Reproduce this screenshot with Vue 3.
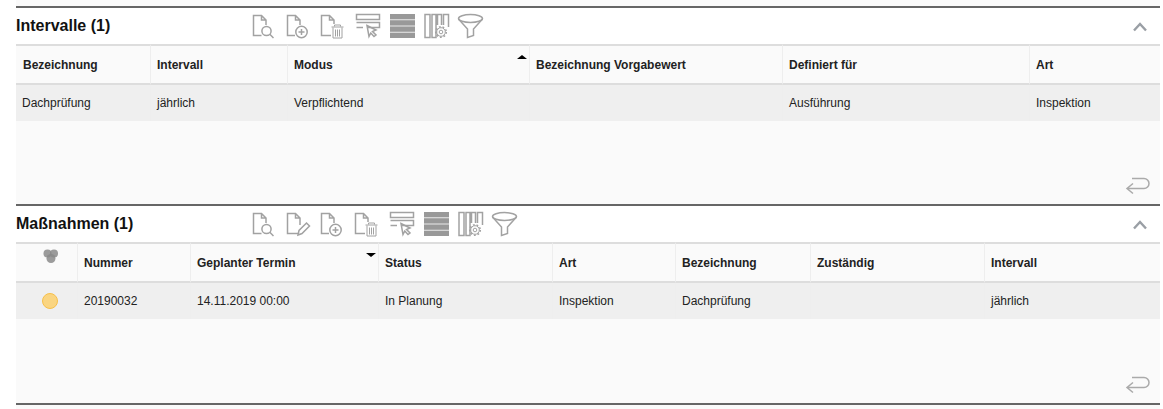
<template>
  <div class="page">
    <svg class="defs" width="0" height="0">
      <symbol id="i-search" viewBox="0 0 28 26">
        <path d="M9.5 22.5H1.5V2.5H9.5L14 7V12M9.5 2.5V7H14" />
        <circle cx="14.5" cy="18" r="4.6" />
        <path d="M17.8 21.3L21.5 25" />
      </symbol>
      <symbol id="i-edit" viewBox="0 0 28 26">
        <path d="M13 22.5H1.5V2.5H9.5L14 7V14M9.5 2.5V7H14" />
        <path d="M12 24L13 19.5L20.5 12L23.5 15L16 22.5Z" />
      </symbol>
      <symbol id="i-add" viewBox="0 0 28 26">
        <path d="M9 22.5H1.5V2.5H9.5L14 7V12M9.5 2.5V7H14" />
        <circle cx="15.5" cy="19" r="5.7" />
        <path d="M15.5 16V22M12.5 19H18.5" />
      </symbol>
      <symbol id="i-trash" viewBox="0 0 28 26">
        <path d="M11 22.5H1.5V2.5H9.5L14 7V11M9.5 2.5V7H14" />
        <path class="thin" d="M14.5 13.5V12H20.5V13.5M11.5 14H23.5M13 14.5V25H22V14.5M15.5 16.5V23.5M17.5 16.5V23.5M19.5 16.5V23.5" />
      </symbol>
      <symbol id="i-row" viewBox="0 0 28 26">
        <path d="M2.5 1.5H25.5V6.5H2.5ZM2.5 9.5H25.5V14.5H14M9 14.5H2.5" />
        <path d="M13 12.5L22 17L18.5 18.5L22 22L20 23.5L16.8 20L15 23.5Z" />
      </symbol>
      <symbol id="i-stack" viewBox="0 0 28 26">
        <rect class="solid" x="2" y="1" width="25" height="5.4" />
        <rect class="solid" x="2" y="7.2" width="25" height="5.4" />
        <rect class="solid" x="2" y="13.4" width="25" height="5.4" />
        <rect class="solid" x="2" y="19.6" width="25" height="5.4" />
      </symbol>
      <symbol id="i-cols" viewBox="0 0 28 26">
        <path d="M3 1.5H8V24.5H3ZM10 1.5H14V24.5H10ZM15.5 12V1.5H19.5V12M21.5 12V1.5H26.5V14" />
        <circle class="thin" cx="19" cy="19" r="1.8" />
        <circle class="thin" cx="19" cy="19" r="4.3" />
        <circle cx="19" cy="19" r="5.3" stroke-dasharray="1.8 1.9" />
      </symbol>
      <symbol id="i-filter" viewBox="0 0 28 26">
        <ellipse cx="14.5" cy="5.5" rx="12" ry="4" />
        <path d="M2.5 6L11.5 16V24.5L17.5 22.5V16L26.5 6" />
      </symbol>
    </svg>

    <section v-for="panel in panels" :key="panel.title" class="panel">
      <header class="panelHead">
        <h2>{{ panel.title }}</h2>
        <div class="tools">
          <svg v-for="icon in panel.icons" :key="icon" class="tool" width="28" height="26">
            <use :href="'#i-' + icon" width="28" height="26" />
          </svg>
        </div>
        <svg class="collapse" width="16" height="11" viewBox="0 0 16 11">
          <path d="M2 9.5L8 3L14 9.5" />
        </svg>
      </header>

      <table>
        <colgroup>
          <col v-for="c in panel.columns" :key="c.name" :style="{ width: c.width + 'px' }" />
        </colgroup>
        <thead>
          <tr>
            <th v-for="c in panel.columns" :key="c.name">
              <svg v-if="c.mixer" class="mixer" width="16" height="15" viewBox="0 0 16 15">
                <circle cx="4.5" cy="4.5" r="4" />
                <circle cx="11" cy="4.5" r="4" />
                <circle cx="8" cy="9.5" r="4.5" />
              </svg>
              {{ c.name }}
              <span v-if="c.sort" class="sort" :class="c.sort"></span>
            </th>
          </tr>
        </thead>
        <tbody>
          <tr>
            <td v-for="(cell, i) in panel.row" :key="i">
              <span v-if="cell === 'dot'" class="dot"></span>
              <template v-else>{{ cell }}</template>
            </td>
          </tr>
        </tbody>
      </table>

      <div class="panelFoot">
        <svg class="back" width="25" height="18" viewBox="0 0 25 18">
          <path d="M7 1.5H19A5 5 0 0 1 19 11.5H2M8 6.5L2 11.5L8 16.5" />
        </svg>
      </div>
    </section>
  </div>
</template>

<script setup>
const panels = [
  {
    title: "Intervalle (1)",
    icons: ["search", "add", "trash", "row", "stack", "cols", "filter"],
    columns: [
      { name: "Bezeichnung", width: 134 },
      { name: "Intervall", width: 137 },
      { name: "Modus", width: 242, sort: "up" },
      { name: "Bezeichnung Vorgabewert", width: 253 },
      { name: "Definiert für", width: 247 },
      { name: "Art", width: 131 },
    ],
    row: ["Dachprüfung", "jährlich", "Verpflichtend", "", "Ausführung", "Inspektion"],
  },
  {
    title: "Maßnahmen (1)",
    icons: ["search", "edit", "add", "trash", "row", "stack", "cols", "filter"],
    columns: [
      { name: "", width: 61, mixer: true },
      { name: "Nummer", width: 113 },
      { name: "Geplanter Termin", width: 188, sort: "down" },
      { name: "Status", width: 174 },
      { name: "Art", width: 123 },
      { name: "Bezeichnung", width: 135 },
      { name: "Zuständig", width: 174 },
      { name: "Intervall", width: 176 },
    ],
    row: ["dot", "20190032", "14.11.2019 00:00", "In Planung", "Inspektion", "Dachprüfung", "", "jährlich"],
  },
]
</script>

<style>
body {
  background: #fff;
}
</style>

<style scoped>
.page {
  width: 1144px;
  height: 409px;
  margin-left: 16px;
  padding-top: 6px;
  box-sizing: border-box;
  background: #fafafa;
  font-family: "Liberation Sans", Arial, sans-serif;
  font-size: 12px;
  color: #222;
}

.defs {
  position: absolute;
}

.defs path,
.defs circle,
.defs ellipse {
  fill: none;
  stroke: #a2a2a2;
  stroke-width: 1.5;
}

.defs .thin {
  stroke-width: 1;
}

.defs .solid {
  fill: #999;
  stroke: none;
}

.panel {
  height: 198px;
  box-sizing: border-box;
  display: flex;
  flex-direction: column;
  border-top: 2px solid #666;
}

.panel:last-child {
  height: 201px;
  border-bottom: 2px solid #666;
}

.panelHead {
  height: 36px;
  flex: none;
  display: flex;
  align-items: center;
  background: #fff;
}

.panelHead h2 {
  width: 236px;
  margin: 0;
  font-size: 16px;
  font-weight: bold;
  color: #111;
}

.tools {
  display: flex;
  gap: 6px;
  flex: 1;
}

.collapse {
  margin-right: 12px;
  fill: none;
  stroke: #9a9fa5;
  stroke-width: 2.4;
}

table {
  width: 100%;
  flex: none;
  table-layout: fixed;
  border-collapse: separate;
  border-spacing: 0;
}

th,
td {
  position: relative;
  box-sizing: border-box;
  padding: 0 6px;
  border-left: 1px solid #eee;
  text-align: left;
  font-weight: normal;
}

th:first-child,
td:first-child {
  border-left: 0;
}

th {
  height: 41px;
  border-top: 2px solid #ddd;
  border-bottom: 2px solid #ddd;
  font-weight: bold;
  background: #fafafa;
  color: #222;
}

th:first-child {
  padding-left: 7px;
}

td {
  height: 36px;
  background: #efefef;
}

.sort {
  position: absolute;
  top: 9px;
  right: 2px;
  border-left: 5px solid transparent;
  border-right: 5px solid transparent;
}

.sort.up {
  border-bottom: 4px solid #000;
}

.sort.down {
  border-top: 4px solid #000;
}

.mixer {
  position: absolute;
  top: 5px;
  left: 27px;
  fill: #8a8a8a;
  fill-opacity: 0.85;
}

.dot {
  display: block;
  width: 16px;
  height: 16px;
  box-sizing: border-box;
  margin-left: 20px;
  border: 1px solid #f7c04a;
  border-radius: 50%;
  background: #fad581;
}

.panelFoot {
  flex: 1;
  display: flex;
  justify-content: flex-end;
  align-items: flex-end;
  padding: 0 10px 9px 0;
}

.back {
  fill: none;
  stroke: #aaa;
  stroke-width: 1.5;
}
</style>
